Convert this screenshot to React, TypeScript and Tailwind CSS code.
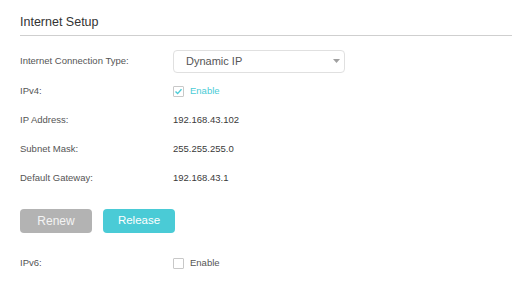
import React from "react";

function Check({ checked }: { checked: boolean }) {
  return (
    <span className="inline-flex w-[11px] h-[11px] items-center justify-center border border-[#c8c8c8] rounded-[1px] bg-white">
      {checked && (
        <svg width="9" height="9" viewBox="0 0 9 9">
          <path d="M1.5 4.5 L3.6 6.6 L7.5 2.2" fill="none" stroke="#4acbd6" strokeWidth="1.4" />
        </svg>
      )}
    </span>
  );
}

function Row({ label, children, className = "" }: { label: string; children: React.ReactNode; className?: string }) {
  return (
    <div className={`flex items-center h-[18px] ${className}`}>
      <div className="w-[153px] shrink-0 text-[9.5px] text-[#555]">{label}</div>
      <div className="flex items-center text-[9.5px] text-[#3a3a3a]">{children}</div>
    </div>
  );
}

export default function App() {
  return (
    <div className="w-[512px] h-[287px] bg-white overflow-hidden pl-5" style={{ fontFamily: '"Liberation Sans", Arial, sans-serif' }}>
      <div className="pt-[15px] pb-[5px] border-b border-[#cfcfcf] text-[12.5px] leading-[15px] text-[#333]">
        Internet Setup
      </div>

      <div className="flex items-center mt-[14px] h-[23px]">
        <div className="w-[153px] shrink-0 text-[9.5px] text-[#555]">Internet Connection Type:</div>
        <div className="relative w-[172px] h-[23px] border border-[#e0e0e0] rounded-[4px] flex items-center pl-[12px] text-[11px] text-[#555]">
          Dynamic IP
          <svg className="absolute right-[4px] top-[8px]" width="7" height="4" viewBox="0 0 7 4">
            <path d="M0 0 H7 L3.5 4 Z" fill="#a0a0a0" />
          </svg>
        </div>
      </div>

      <Row label="IPv4:" className="mt-[9px]">
        <Check checked />
        <span className="ml-[6px] text-[#4acbd6]">Enable</span>
      </Row>
      <Row label="IP Address:" className="mt-[11px]">192.168.43.102</Row>
      <Row label="Subnet Mask:" className="mt-[11px]">255.255.255.0</Row>
      <Row label="Default Gateway:" className="mt-[11px]">192.168.43.1</Row>

      <div className="flex gap-[11px] mt-[22px]">
        <button className="w-[72px] h-[24px] rounded-[4px] bg-[#b3b3b3] text-[12px] text-[#f4f4f4]">Renew</button>
        <button className="w-[72px] h-[24px] rounded-[4px] bg-[#4acbd6] text-[11.5px] text-white">Release</button>
      </div>

      <Row label="IPv6:" className="mt-[21px]">
        <Check checked={false} />
        <span className="ml-[6px] text-[#555]">Enable</span>
      </Row>
    </div>
  );
}
